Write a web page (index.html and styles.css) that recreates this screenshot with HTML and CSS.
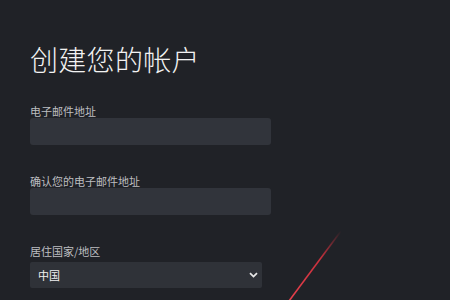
FILE: index.html
```html
<!DOCTYPE html>
<html lang="zh-CN">
<head>
<meta charset="utf-8">
<title>创建您的帐户</title>
<link rel="stylesheet" href="styles.css">
</head>
<body>
<svg class="streak" width="450" height="300" viewBox="0 0 450 300" aria-hidden="true">
  <defs>
    <linearGradient id="g" x1="290" y1="300" x2="341" y2="231" gradientUnits="userSpaceOnUse">
      <stop offset="0" stop-color="#e8404c"/>
      <stop offset="0.6" stop-color="#c8303c"/>
      <stop offset="1" stop-color="#c8303c" stop-opacity="0"/>
    </linearGradient>
  </defs>
  <line x1="289" y1="301" x2="341" y2="231" stroke="url(#g)" stroke-width="1.6"/>
</svg>
<main class="form">
  <h1 class="title">创建您的帐户</h1>
  <div class="field">
    <label class="label">电子邮件地址</label>
    <div class="input"></div>
  </div>
  <div class="field">
    <label class="label">确认您的电子邮件地址</label>
    <div class="input"></div>
  </div>
  <div class="field">
    <label class="label">居住国家/地区</label>
    <div class="select">
      <span class="select-value">中国</span>
      <svg class="chevron" width="9" height="6" viewBox="0 0 9 6"><path d="M1 1.2 L4.5 4.6 L8 1.2" fill="none" stroke="#e6e6e6" stroke-width="1.8"/></svg>
    </div>
  </div>
</main>
</body>
</html>
```
FILE: styles.css
```css
html, body {
  margin: 0;
  padding: 0;
  background: #202227;
  width: 450px;
  height: 300px;
  overflow: hidden;
}
body {
  font-family: "Noto Sans CJK SC", "Noto Sans", sans-serif;
  color: #e8e8e8;
}
.streak {
  position: absolute;
  left: 0;
  top: 0;
  pointer-events: none;
}
.form {
  padding: 42px 0 0 30px;
  display: flex;
  flex-direction: column;
}
.title {
  margin: 0 0 29px 0;
  font-size: 28px;
  line-height: 34px;
  font-weight: 300;
  color: #f2f2f2;
  letter-spacing: 0.3px;
}
.field {
  display: flex;
  flex-direction: column;
  margin-bottom: 30px;
}
.field:last-child {
  margin-bottom: 0;
}
.label {
  font-size: 11px;
  line-height: 13px;
  color: #bdbec0;
}
.input {
  width: 241px;
  height: 27px;
  background: #31343b;
  border-radius: 3px;
}
.select {
  margin-top: 4px;
  width: 232px;
  height: 26px;
  background: #2f3238;
  border-radius: 2px;
  box-sizing: border-box;
  padding: 0 4px 0 8px;
  display: flex;
  align-items: center;
  justify-content: space-between;
}
.select-value {
  font-size: 11px;
  color: #f0f0f0;
}
```
